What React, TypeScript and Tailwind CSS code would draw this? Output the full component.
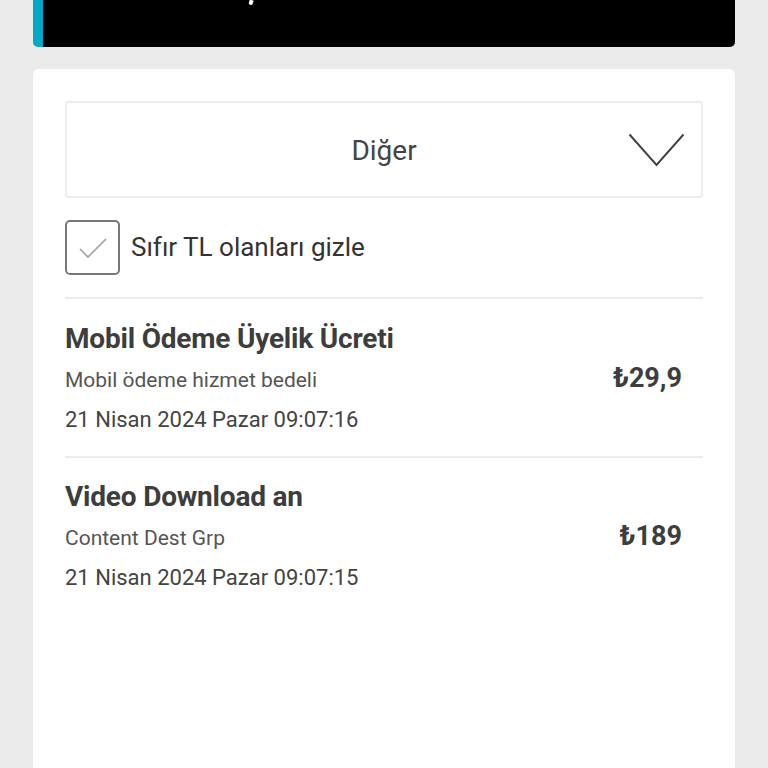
import React from "react";

const font = { fontFamily: "Roboto, 'Noto Sans', sans-serif" };

function Item({ title, sub, date, price, last }: { title: string; sub: string; date: string; price: string; last?: boolean }) {
  return (
    <div className={last ? "flex items-center pt-[21px]" : "flex items-center border-b-2 border-[#ececec] pt-[22px] pb-[17px]"}>
      <div className="flex-1 flex flex-col">
        <div className="text-[28px] leading-[36px] font-bold text-[#3d3d3d] tracking-[-0.2px]">{title}</div>
        <div className="text-[21px] leading-[39px] text-[#555] mt-[4px]">{sub}</div>
        <div className="text-[22px] leading-[39px] text-[#444]">{date}</div>
      </div>
      <div className="text-[27px] font-bold text-[#3d3d3d] pr-[21px] mb-[4px]">{price}</div>
    </div>
  );
}

export default function App() {
  return (
    <div className="w-[768px] h-[768px] bg-[#ebebeb] overflow-hidden" style={font}>
      <div className="mx-[33px] h-[47px] bg-black rounded-b-[5px] border-l-[10px] border-[#00a9c7] relative">
        <div className="absolute left-[206px] top-0 w-[4px] h-[5px] bg-white rounded-b-full rotate-[20deg]" />
      </div>
      <div className="mx-[33px] mt-[22px] bg-white rounded-t-[6px] h-[720px] px-[32px] pt-[32px]">
        <div className="h-[97px] border-2 border-[#ececec] rounded-[3px] flex items-center justify-center relative">
          <span className="text-[28px] text-[#444] mt-[3px]">Diğer</span>
          <svg className="absolute right-[16px] top-[30px]" width="57" height="35" viewBox="0 0 57 35" fill="none">
            <path d="M1.5 1.5 L28.5 32 L55.5 1.5" stroke="#444" strokeWidth="2" />
          </svg>
        </div>
        <div className="flex items-center mt-[22px] mb-[22px]">
          <div className="w-[55px] h-[55px] border-2 border-[#777] rounded-[5px] flex items-center justify-center">
            <svg width="30" height="24" viewBox="0 0 30 24" fill="none">
              <path d="M2 13 L10 21 L28 3" stroke="#a0a0a0" strokeWidth="1.6" />
            </svg>
          </div>
          <span className="ml-[11px] text-[26px] text-[#333]">Sıfır TL olanları gizle</span>
        </div>
        <div className="border-t-2 border-[#ececec]">
          <Item title="Mobil Ödeme Üyelik Ücreti" sub="Mobil ödeme hizmet bedeli" date="21 Nisan 2024 Pazar 09:07:16" price="₺29,9" />
          <Item title="Video Download an" sub="Content Dest Grp" date="21 Nisan 2024 Pazar 09:07:15" price="₺189" last />
        </div>
      </div>
    </div>
  );
}
